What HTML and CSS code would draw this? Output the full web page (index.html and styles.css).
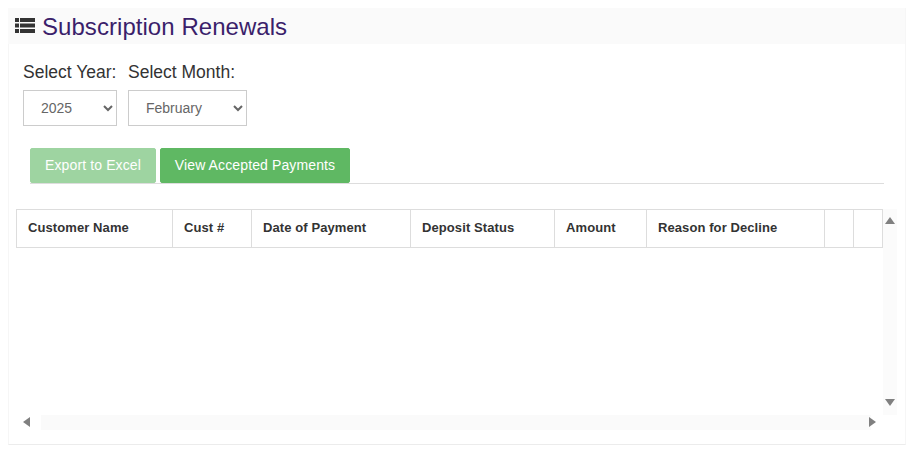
FILE: index.html
```html
<!DOCTYPE html>
<html lang="en">
<head>
<meta charset="utf-8">
<title>Subscription Renewals</title>
<link rel="stylesheet" href="styles.css">
</head>
<body>
<div class="panel">
  <header class="panel-head">
    <svg class="list-icon" width="20" height="15" viewBox="0 0 20 15" aria-hidden="true">
      <path d="M0 0h4v4H0zM5 0h15v4H5zM0 5.500h4v4H0zM5 5.500h15v4H5zM0 11h4v4H0zM5 11h15v4H5z"/>
    </svg>
    <h1 class="title">Subscription Renewals</h1>
  </header>
  <div class="filters">
    <div class="field">
      <label class="field-label" for="year">Select Year:</label>
      <select class="field-select year" id="year"><option>2025</option></select>
    </div>
    <div class="field">
      <label class="field-label" for="month">Select Month:</label>
      <select class="field-select month" id="month"><option>February</option></select>
    </div>
  </div>
  <div class="actions">
    <button class="btn btn-export btn-disabled" type="button">Export to Excel</button>
    <button class="btn btn-view" type="button">View Accepted Payments</button>
  </div>
  <div class="scroller">
    <div class="viewport">
      <table class="grid">
        <thead>
          <tr>
            <th class="c-name">Customer Name</th>
            <th class="c-num">Cust #</th>
            <th class="c-date">Date of Payment</th>
            <th class="c-status">Deposit Status</th>
            <th class="c-amount">Amount</th>
            <th class="c-reason">Reason for Decline</th>
            <th class="c-x"></th>
            <th class="c-x"></th>
          </tr>
        </thead>
      </table>
    </div>
    <div class="vbar"><span class="arrow up"></span><span class="arrow down"></span></div>
    <div class="hbar"><span class="arrow left"></span><span class="arrow right"></span></div>
  </div>
</div>
</body>
</html>
```
FILE: styles.css
```css
* { box-sizing: border-box; }
html, body { height: 100%; }
body {
  margin: 8px 10px 5px 8px;
  background: #fff;
  font-family: "Liberation Sans", Arial, sans-serif;
  color: #333;
  overflow: hidden;
}
.panel {
  height: 437px;
  border: 1px solid #f6f6f6;
  border-top: 0;
  border-bottom-color: #ececec;
  background: #fff;
}
.panel-head {
  display: flex;
  align-items: center;
  gap: 7px;
  height: 36px;
  padding: 0 0 0 7px;
  margin-left: -1px;
  background: #fafafa;
}
.list-icon { fill: #333; flex: none; margin-top: -1px; }
.title {
  margin: 2px 0 0;
  font-size: 24px;
  font-weight: 400;
  line-height: 36px;
  letter-spacing: .05px;
  color: #3b1f6b;
}
.filters {
  display: flex;
  gap: 11px;
  padding: 18px 0 0 14px;
}
.field { display: flex; flex-direction: column; }
.field-label {
  font-size: 17.5px;
  line-height: 20px;
  height: 20px;
  margin-bottom: 8px;
  color: #333;
}
.field-select {
  height: 36px;
  padding: 6px 13px;
  background: #fff;
  border: 1px solid #ccc;
  border-radius: 0;
  font-family: inherit;
  font-size: 14px;
  color: #666;
}
.year { width: 94px; }
.month { width: 119px; }
.actions {
  display: flex;
  gap: 4px;
  height: 36px;
  margin: 22px 21px 0 21px;
  border-bottom: 1px solid #ddd;
}
.btn {
  height: 35px;
  padding: 0 0 2px;
  border: 1px solid #5fb863;
  border-radius: 2px;
  background: #5fb863;
  font-family: inherit;
  font-size: 14px;
  letter-spacing: .12px;
  color: #fff;
}
.btn-export { width: 126px; }
.btn-view { width: 190px; }
.btn-disabled { opacity: .6; }
.scroller {
  display: grid;
  grid-template-columns: 867px 14px;
  grid-template-rows: 206px 15px;
  margin: 25px 0 0 7px;
}
.viewport { overflow: hidden; }
.grid {
  width: 867px;
  table-layout: fixed;
  border-collapse: collapse;
  margin: 0;
}
.grid th {
  height: 38px;
  padding: 0 11px 2px;
  border: 1px solid #ddd;
  text-align: left;
  font-size: 13px;
  font-weight: 700;
  letter-spacing: .09px;
  color: #333;
  white-space: nowrap;
}
.c-name { width: 156px; }
.c-num { width: 79px; }
.c-date { width: 159px; }
.c-status { width: 144px; }
.c-amount { width: 92px; }
.c-reason { width: 178px; }
.c-x { width: 29px; }
.vbar {
  display: flex;
  flex-direction: column;
  justify-content: space-between;
  align-items: center;
  padding: 8px 0 9px;
  background: #fbfbfb;
}
.hbar {
  display: flex;
  grid-column: 1 / 3;
  justify-content: space-between;
  align-items: center;
  padding: 0 21px 2px 7px;
  background: linear-gradient(to right, #fff 25px, #fafafa 25px, #fafafa 855px, #fff 855px);
}
.arrow { width: 0; height: 0; display: block; border-style: solid; border-color: transparent; }
.up { border-width: 0 5px 7px; border-bottom-color: #808080; }
.down { border-width: 7px 5px 0; border-top-color: #808080; }
.left { border-width: 5px 7px 5px 0; border-right-color: #808080; }
.right { border-width: 5px 0 5px 7px; border-left-color: #808080; }
```
